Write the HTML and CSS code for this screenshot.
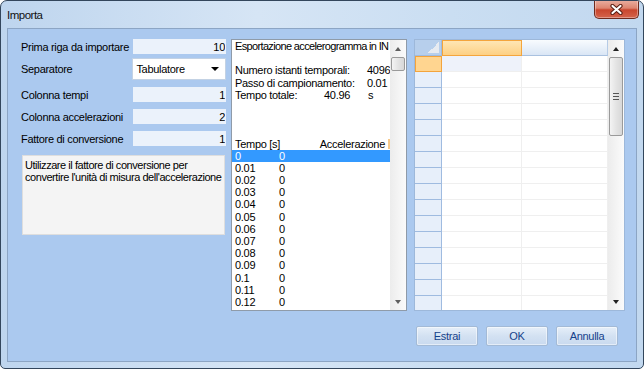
FILE: index.html
```html
<!DOCTYPE html>
<html lang="it">
<head>
  <meta charset="UTF-8" />
  <title>Importa</title>
  <link rel="stylesheet" href="styles.css">
</head>
<body>

  <div class="window">
    <div class="titlebar">
      <span class="title">Importa</span>
      <button class="close" title="Chiudi">
        <svg width="13" height="11" viewBox="0 0 13 11">
          <path d="M2.5 2 L10.5 9 M10.5 2 L2.5 9" stroke="#5a1d12" stroke-width="4.2" stroke-linecap="round"/>
          <path d="M2.5 2 L10.5 9 M10.5 2 L2.5 9" stroke="#fff" stroke-width="2.2" stroke-linecap="round"/>
        </svg>
      </button>
    </div>

    <div class="client">
      <div class="main">

        <!-- Parametri di importazione -->
        <div class="params">
          <div class="row first">
            <label>Prima riga da importare</label>
            <input class="field" type="text" value="10">
          </div>
          <div class="row">
            <label>Separatore</label>
            <div class="combo"><span>Tabulatore</span><i class="arrow-down"></i></div>
          </div>
          <div class="row">
            <label>Colonna tempi</label>
            <input class="field" type="text" value="1">
          </div>
          <div class="row">
            <label>Colonna accelerazioni</label>
            <input class="field" type="text" value="2">
          </div>
          <div class="row">
            <label>Fattore di conversione</label>
            <input class="field" type="text" value="1">
          </div>
          <div class="note">Utilizzare il fattore di conversione per<br>convertire l'unità di misura dell'accelerazione</div>
        </div>

        <!-- Anteprima del file -->
        <div class="preview">
          <div class="plist" id="plist">
            <div class="ln">Esportazione accelerogramma in IN</div>
            <div class="ln"></div>
            <div class="ln"><span class="key">Numero istanti temporali:</span>4096</div>
            <div class="ln"><span class="key">Passo di campionamento:</span>0.01</div>
            <div class="ln"><span class="key short">Tempo totale:</span><span class="num">40.96</span>s</div>
            <div class="ln"></div>
            <div class="ln"></div>
            <div class="ln"></div>
            <div class="ln head"><span class="grow">Tempo [s]</span><span>Accelerazione</span><i class="mark"></i></div>
          </div>
          <div class="vscroll">
            <div class="sbtn"><i class="tri-up"></i></div>
            <div class="thumb small"></div>
            <div class="track"></div>
            <div class="sbtn"><i class="tri-down"></i></div>
          </div>
        </div>

        <!-- Griglia dati -->
        <div class="grid">
          <div class="gtable" id="gtable">
            <div class="grow-row header">
              <div class="rh corner"><span class="corner-tri"></span></div>
              <div class="c1 hsel"></div>
              <div class="c2 hnorm"></div>
            </div>
          </div>
          <div class="vscroll dark">
            <div class="sbtn"><i class="tri-up"></i></div>
            <div class="thumb big"><i class="grip"></i></div>
            <div class="track"></div>
            <div class="sbtn"><i class="tri-down"></i></div>
          </div>
        </div>

      </div>

      <div class="buttons">
        <button class="btn">Estrai</button>
        <button class="btn">OK</button>
        <button class="btn">Annulla</button>
      </div>
    </div>
  </div>

  <script>
    // righe tempo / accelerazione dell'anteprima
    const plist = document.getElementById('plist');
    for (let i = 0; i <= 12; i++) {
      const t = i === 0 ? '0' : String(+(i / 100).toFixed(2));
      const ln = document.createElement('div');
      ln.className = i === 0 ? 'ln sel' : 'ln';
      ln.innerHTML = '<span class="t">' + t + '</span>0';
      plist.appendChild(ln);
    }

    // righe vuote della griglia
    const gtable = document.getElementById('gtable');
    for (let r = 0; r < 16; r++) {
      const row = document.createElement('div');
      row.className = 'grow-row';
      row.innerHTML = '<div class="rh' + (r === 0 ? ' active' : '') + '"></div>' +
        '<div class="c1' + (r === 0 ? ' cur' : '') + '"></div><div class="c2"></div>';
      gtable.appendChild(row);
    }
  </script>
</body>
</html>
```

FILE: styles.css
```css
body {
  margin: 0;
  font-family: "Liberation Sans", Arial, sans-serif;
  font-size: 11px;
  letter-spacing: -0.3px;
  color: #000;
  background: #fff;
}

.window {
  width: 644px; height: 369px; box-sizing: border-box;
  border: 1px solid #33465c; border-radius: 7px 7px 5px 5px;
  background: linear-gradient(to right, #bed5ee, #d6e5f5 40%, #cadef2 70%, #c2d8ef);
  display: flex; flex-direction: column; overflow: hidden;
}

/* barra del titolo */
.titlebar { height: 27px; display: flex; align-items: flex-start; padding-left: 6px; flex-shrink: 0; }
.title { margin-top: 7px; line-height: 14px; font-size: 11.5px; letter-spacing: -0.5px; color: #111; }
.close {
  margin: -1px 4px 0 auto; width: 45px; height: 19px; padding: 0;
  border: 1px solid #6e2a1e; border-top: none; border-radius: 0 0 5px 5px;
  background: linear-gradient(#eab0a2, #dd8570 45%, #c9462e 55%, #d4644c);
  display: flex; align-items: center; justify-content: center;
  box-shadow: inset 0 0 0 1px rgba(255,255,255,0.35);
}

/* area client */
.client {
  flex: 1; margin: 0 6px 6px; border: 1px solid #8ca5c4;
  background: #abc9ef; display: flex; flex-direction: column;
  padding: 10px 0 0 13px;
}
.main { display: flex; height: 272px; }

.params { width: 205px; margin-right: 5px; display: flex; flex-direction: column; gap: 7px; }
.row { display: flex; align-items: center; }
.row.first { margin-bottom: -3px; }
.row label { width: 112px; white-space: nowrap; }
.field {
  width: 93px; height: 15px; box-sizing: border-box; margin: 0;
  border: none; background: #ebf2fb; padding: 0 1px 0 0;
  font: inherit; letter-spacing: inherit; text-align: right;
}
.combo {
  width: 94px; height: 22px; box-sizing: border-box;
  border: 1px solid #c3d2e4; background: #fff;
  display: flex; align-items: center; justify-content: space-between;
  padding: 0 6px 0 3px;
}
.arrow-down { width: 0; height: 0; border-left: 4px solid transparent; border-right: 4px solid transparent; border-top: 4px solid #000; }
.note {
  margin: 2px 0 0 1px; width: 203px; height: 80px; box-sizing: border-box;
  background: #f4f4f4; border: 1px solid #dedede;
  padding: 3px 2px; line-height: 12.3px; white-space: nowrap;
  letter-spacing: -0.45px;
}

/* anteprima */
.preview { width: 176px; box-sizing: border-box; margin-right: 7px; display: flex; border: 1px solid #8f9ba9; background: #fff; }
.plist { flex: 1; overflow: hidden; }
.ln { height: 12.2px; line-height: 12.2px; padding-left: 3px; white-space: nowrap; overflow: hidden; }
.ln:first-child { letter-spacing: -0.65px; }
.key { display: inline-block; width: 132px; }
.key.short { width: 89px; }
.num { display: inline-block; width: 44px; }
.t { display: inline-block; width: 44px; }
.ln.head { display: flex; align-items: center; }
.ln.head .grow { flex: 1; }
.mark { width: 2px; height: 10px; margin-left: 3px; background: #f7c98a; }
.ln.sel { background: #3399ff; color: #fff; }

/* barre di scorrimento */
.vscroll { width: 16px; flex-shrink: 0; display: flex; flex-direction: column; background: linear-gradient(to right, #ececec, #fbfbfb); }
.sbtn { height: 17px; display: flex; align-items: center; justify-content: center; }
.tri-up { width: 0; height: 0; border-left: 3.5px solid transparent; border-right: 3.5px solid transparent; border-bottom: 4px solid #5f5f5f; }
.tri-down { width: 0; height: 0; border-left: 3.5px solid transparent; border-right: 3.5px solid transparent; border-top: 4px solid #5f5f5f; }
.dark .tri-up { border-bottom-color: #222; }
.dark .tri-down { border-top-color: #222; }
.thumb {
  margin: 0 1px; box-sizing: border-box; border: 1px solid #9a9a9a; border-radius: 2px;
  background: linear-gradient(to right, #f4f4f4, #e4e4e4 50%, #d8d8d8);
  display: flex; align-items: center; justify-content: center;
}
.thumb.small { height: 14px; }
.thumb.big { height: 79px; }
.grip { width: 6px; height: 5px; border-top: 1px solid #555; border-bottom: 1px solid #555; background: linear-gradient(transparent 2px, #555 2px, #555 3px, transparent 3px); }
.track { flex: 1; }

/* griglia */
.grid { width: 211px; box-sizing: border-box; display: flex; border: 1px solid #9db8da; background: #fff; }
.gtable { flex: 1; overflow: hidden; }
.grow-row { display: flex; height: 16px; }
.grow-row > div { box-sizing: border-box; height: 16px; }
.rh { width: 27px; background: #e7effa; border-right: 1px solid #9fbbe0; border-bottom: 1px solid #9fbbe0; }
.rh.active { background: #ffd590; border: 1px solid #f3a43c; }
.rh.corner { background: #b7cfec; display: flex; align-items: flex-end; justify-content: flex-end; padding: 0 2px 2px 0; }
.corner-tri { width: 11px; height: 11px; background: linear-gradient(to bottom right, transparent 50%, #e7ebf1 50%); }
.c1 { width: 80px; border-right: 1px solid #efefef; border-bottom: 1px solid #efefef; }
.c2 { width: 86px; border-right: 1px solid #efefef; border-bottom: 1px solid #efefef; }
.c1.cur { background: #eef2fa; }
.hsel { background: linear-gradient(#fee6b4, #fdd084); border: 1px solid #f4a53c !important; }
.hnorm { background: linear-gradient(#f8fbfe, #dae6f5); border-right: 1px solid #b6cbe6 !important; border-bottom: 1px solid #a9c1df !important; }

/* pulsanti */
.buttons { display: flex; justify-content: flex-end; gap: 8px; margin-top: 15px; padding-right: 18px; }
.btn {
  width: 62px; height: 20px; padding: 0;
  border: 1px solid #a3bad6; border-radius: 2px;
  background: linear-gradient(#e6eff9, #d3e1f2 50%, #c9daef);
  box-shadow: inset 0 0 0 1px rgba(255,255,255,0.5);
  font: inherit; letter-spacing: inherit; color: #15428b;
}
```
